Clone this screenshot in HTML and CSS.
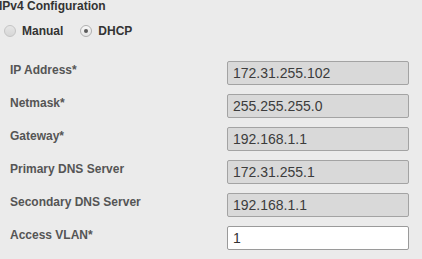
FILE: index.html
```html
<!DOCTYPE html>
<html lang="en">
<head>
    <meta charset="UTF-8">
    <meta name="viewport" content="width=device-width, initial-scale=1.0">
    <title>IPv4 Configuration</title>
    <link rel="stylesheet" href="styles.css">
</head>
<body>
    <div class="panel">
        <h2 class="panel-title">IPv4 Configuration</h2>

        <div class="mode-group">
            <label class="mode-option">
                <input type="radio" name="mode" value="manual">
                <span>Manual</span>
            </label>
            <label class="mode-option">
                <input type="radio" name="mode" value="dhcp" checked>
                <span>DHCP</span>
            </label>
        </div>

        <div class="fields">
            <label class="field-label" for="ip">IP Address*</label>
            <input class="field-input" type="text" id="ip" value="172.31.255.102" readonly>

            <label class="field-label" for="mask">Netmask*</label>
            <input class="field-input" type="text" id="mask" value="255.255.255.0" readonly>

            <label class="field-label" for="gw">Gateway*</label>
            <input class="field-input" type="text" id="gw" value="192.168.1.1" readonly>

            <label class="field-label" for="dns1">Primary DNS Server</label>
            <input class="field-input" type="text" id="dns1" value="172.31.255.1" readonly>

            <label class="field-label" for="dns2">Secondary DNS Server</label>
            <input class="field-input" type="text" id="dns2" value="192.168.1.1" readonly>

            <label class="field-label" for="vlan">Access VLAN*</label>
            <input class="field-input editable" type="text" id="vlan" value="1">
        </div>
    </div>
</body>
</html>
```

FILE: styles.css
```css
:root {
    --page-bg: #EBEBEB;
    --text-dark: #333333;
    --text-label: #555555;
    --input-readonly: #D9D9D9;
    --input-border: #A3A3A3;
}

body {
    margin: 0;
    background-color: var(--page-bg);
    font-family: 'Liberation Sans', Arial, sans-serif;
    color: var(--text-dark);
    overflow: hidden;
}

.panel {
    padding: 0;
}

.panel-title {
    margin: -1px 0 0 -1px;
    font-size: 12px;
    line-height: 14px;
    font-weight: bold;
    color: var(--text-dark);
}

.mode-group {
    display: flex;
    align-items: center;
    height: 24px;
    margin-top: 6px;
    padding-left: 4px;
    gap: 17px;
}

.mode-option {
    display: flex;
    align-items: center;
    gap: 6px;
    font-size: 12px;
    font-weight: bold;
    color: var(--text-dark);
}

.mode-option input[type="radio"] {
    appearance: none;
    -webkit-appearance: none;
    margin: 0;
    width: 12px;
    height: 12px;
    border-radius: 50%;
    border: 1px solid #C4C4C4;
    background: linear-gradient(#E6E6E6, #D6D6D6);
    box-sizing: border-box;
    position: relative;
}

.mode-option input[type="radio"]:checked {
    background: linear-gradient(#F8F8F8, #E4E4E4);
    border-color: #B0B0B0;
}

.mode-option input[type="radio"]:checked::after {
    content: "";
    position: absolute;
    left: 3px;
    top: 3px;
    width: 4px;
    height: 4px;
    border-radius: 50%;
    background-color: #5A5A5A;
}

.fields {
    display: grid;
    grid-template-columns: 217px 182px;
    grid-auto-rows: 24px;
    row-gap: 9px;
    align-items: center;
    margin-top: 18px;
    padding-left: 10px;
}

.field-label {
    font-size: 12px;
    font-weight: bold;
    color: var(--text-label);
    margin-top: -7px;
}

.field-input {
    height: 24px;
    box-sizing: border-box;
    margin: 0;
    padding: 0 5px;
    border: 1px solid var(--input-border);
    border-radius: 2px;
    background-color: var(--input-readonly);
    font-family: 'Liberation Sans', Arial, sans-serif;
    font-size: 14px;
    color: #3C3C3C;
    outline: none;
}

.field-input.editable {
    background-color: #FFFFFF;
    border-color: #9A9A9A;
    color: var(--text-dark);
}
```
